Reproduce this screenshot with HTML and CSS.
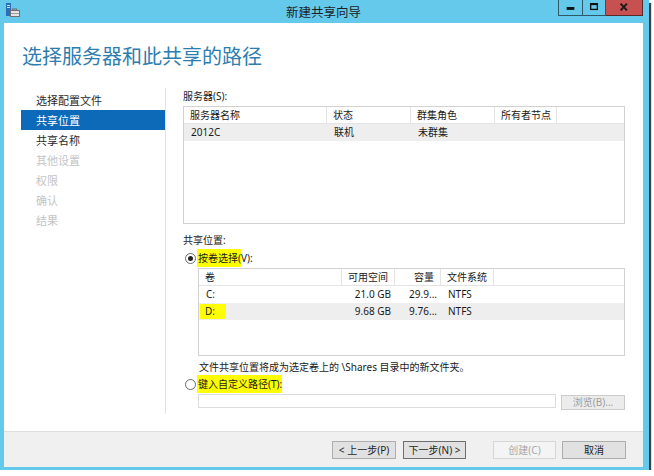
FILE: index.html
```html
<!DOCTYPE html>
<html lang="zh-CN">
<head>
<meta charset="utf-8">
<title>新建共享向导</title>
<link rel="stylesheet" href="styles.css">
</head>
<body>
<div class="window">
  <div class="titlebar">
    <div class="tb-left">
      <svg class="app-icon" width="14" height="14" viewBox="0 0 14 14">
        <rect x="0" y="0" width="5" height="13" fill="#2b6fb8"/>
        <rect x="1" y="2" width="3" height="1" fill="#bfe0ff"/>
        <rect x="1" y="4" width="3" height="1" fill="#bfe0ff"/>
        <rect x="6.5" y="6" width="4" height="2" fill="none" stroke="#6d6d6d" stroke-width="1"/>
        <rect x="4.5" y="7.5" width="9" height="6" fill="#e4e4e4" stroke="#707070" stroke-width="1"/>
        <rect x="5" y="10" width="8" height="1" fill="#9a9a9a"/>
      </svg>
    </div>
    <div class="tb-title">新建共享向导</div>
    <div class="tb-controls">
      <div class="ctl ctl-min"><svg width="24" height="15" viewBox="0 0 24 15"><rect x="8" y="7" width="8" height="3" fill="#111"/></svg></div>
      <div class="ctl ctl-max"><svg width="23" height="15" viewBox="0 0 23 15"><rect x="8" y="3.5" width="7" height="6" fill="none" stroke="#111" stroke-width="1.4"/><rect x="8" y="3" width="7.5" height="2" fill="#111"/></svg></div>
      <div class="ctl ctl-close"><svg width="37" height="15" viewBox="0 0 37 15"><path d="M15 3.5 L21.5 10.5 M21.5 3.5 L15 10.5" stroke="#1a1a1a" stroke-width="2"/></svg></div>
    </div>
  </div>
  <div class="client">
    <div class="header">
      <h1>选择服务器和此共享的路径</h1>
    </div>
    <div class="main">
      <ul class="nav">
        <li>选择配置文件</li>
        <li class="active">共享位置</li>
        <li>共享名称</li>
        <li class="disabled">其他设置</li>
        <li class="disabled">权限</li>
        <li class="disabled">确认</li>
        <li class="disabled">结果</li>
      </ul>
      <div class="content">
        <div class="label">服务器(S):</div>
        <div class="lv lv-servers">
          <div class="lv-head">
            <div class="cell">服务器名称</div>
            <div class="cell">状态</div>
            <div class="cell">群集角色</div>
            <div class="cell">所有者节点</div>
            <div class="cell"></div>
          </div>
          <div class="lv-row sel">
            <div class="cell">2012C</div>
            <div class="cell">联机</div>
            <div class="cell">未群集</div>
            <div class="cell"></div>
            <div class="cell"></div>
          </div>
        </div>

        <div class="label label-share">共享位置:</div>
        <div class="radio-row">
          <span class="radio checked"></span>
          <span class="radio-text"><span class="hl">按卷选择(</span>V):</span>
        </div>
        <div class="lv lv-volumes">
          <div class="lv-head">
            <div class="cell">卷</div>
            <div class="cell r">可用空间</div>
            <div class="cell r">容量</div>
            <div class="cell">文件系统</div>
            <div class="cell"></div>
          </div>
          <div class="lv-row">
            <div class="cell">C:</div>
            <div class="cell r">21.0 GB</div>
            <div class="cell r">29.9...</div>
            <div class="cell fs">NTFS</div>
            <div class="cell"></div>
          </div>
          <div class="lv-row sel">
            <div class="cell vol-d"><span class="hl hl-d">D:</span></div>
            <div class="cell r">9.68 GB</div>
            <div class="cell r">9.76...</div>
            <div class="cell fs">NTFS</div>
            <div class="cell"></div>
          </div>
        </div>
        <div class="note">文件共享位置将成为选定卷上的 \Shares 目录中的新文件夹。</div>
        <div class="radio-row radio-row-2">
          <span class="radio"></span>
          <span class="radio-text"><span class="hl">键入自定义路径(T):</span></span>
        </div>
        <div class="path-row">
          <div class="path-input"></div>
          <button class="browse" disabled>浏览(B)...</button>
        </div>
      </div>
    </div>
    <div class="footer">
      <button class="btn btn-prev">&lt; 上一步(P)</button>
      <button class="btn btn-next">下一步(N) &gt;</button>
      <button class="btn btn-create" disabled>创建(C)</button>
      <button class="btn btn-cancel">取消</button>
    </div>
  </div>
</div>
</body>
</html>
```

FILE: styles.css
```css
* { box-sizing: border-box; margin: 0; padding: 0; }
html, body { background: #fff; }
body {
  margin: 0;
  font-family: "Noto Sans", "Noto Sans CJK SC", sans-serif;
  color: #222;
}

.window {
  width: 649px;
  height: 470px;
  background: #64c9ea;
  display: flex;
  flex-direction: column;
  padding: 0 6px 3px 4px;
  box-shadow: 2px 3px 1px rgba(0, 0, 0, 0.75);
}

/* title bar */
.titlebar {
  height: 23px;
  display: grid;
  grid-template-columns: 1fr auto 1fr;
  align-items: start;
}
.tb-left { padding: 3px 0 0 2px; height: 23px; }
.app-icon { display: block; }
.tb-title {
  font-size: 12.5px;
  line-height: 23px;
  color: #1e1e1e;
  font-family: "Noto Sans CJK SC", sans-serif;
}
.tb-controls {
  justify-self: end;
  display: flex;
  height: 16px;
}
.ctl {
  height: 16px;
  border: 1px solid #2f5966;
  border-top: none;
  display: flex;
  align-items: center;
  justify-content: center;
}
.ctl svg { display: block; }
.ctl-min { width: 25px; }
.ctl-max { width: 23px; border-left: none; }
.ctl-close { width: 37px; background: #c75050; border-left: none; border-color: #5a2a2a; }

/* client area */
.client {
  flex: 1;
  background: #fff;
  display: flex;
  flex-direction: column;
}
.header {
  height: 62px;
  padding: 21px 0 0 18px;
}
.header h1 {
  font-family: "Noto Sans CJK SC", sans-serif;
  font-weight: 400;
  font-size: 20px;
  line-height: 24px;
  color: #2e7db0;
}

.main {
  flex: 1;
  display: flex;
  padding: 3px 18px 17px 17px;
}

.nav {
  width: 146px;
  list-style: none;
  padding-top: 2px;
  border-right: 1px solid #e2e2e2;
  font-size: 11px;
  font-family: "Noto Sans CJK SC", sans-serif;
}
.nav li {
  height: 20px;
  line-height: 20px;
  padding-left: 15px;
  color: #2a2a2a;
}
.nav li.active { background: #0c6ab9; color: #fff; }
.nav li.disabled { color: #c4c4c4; }

.content {
  flex: 1;
  padding-left: 17px;
  font-size: 10px;
  color: #1a1a1a;
}
.label {
  height: 16px;
  line-height: 16px;
  margin-bottom: 2px;
}
.label-share { margin-top: 8px; margin-bottom: 0; }

/* list views */
.lv {
  border: 1px solid #d2d2d2;
  background: #fff;
}
.lv-servers { height: 118px; }
.lv-volumes { height: 88px; margin: 2px 0 0 15px; }

.lv-head, .lv-row {
  display: grid;
}
.lv-servers .lv-head, .lv-servers .lv-row { grid-template-columns: 143px 84px 84px 62px 1fr; }
.lv-volumes .lv-head, .lv-volumes .lv-row { grid-template-columns: 143px 53px 46px 53px 1fr; }

.lv-head {
  height: 17px;
  border-bottom: 1px solid #e4e4e4;
}
.lv-head .cell {
  height: 16px;
  line-height: 16px;
  border-right: 1px solid #e4e4e4;
  padding: 0 6px;
  white-space: nowrap;
  overflow: hidden;
}
.lv-head .cell:last-child { border-right: none; }
.lv-row { height: 17px; }
.lv-row .cell {
  line-height: 17px;
  padding: 0 7px;
  white-space: nowrap;
}
.lv-row.sel { background: #eeeeee; }
.lv-head .cell.r { text-align: right; padding-right: 6px; }
.lv-row .cell.r { text-align: right; padding-right: 4px; }
.lv-row .cell.fs { padding-left: 7px; }
.lv-row .cell.vol-d { padding-left: 1px; }

.hl { background: #ffff00; }
.hl-d {
  display: inline-block;
  height: 15px;
  line-height: 15px;
  padding: 0 11px 0 5px;
}

/* radios */
.radio-row {
  display: flex;
  align-items: center;
  height: 16px;
  margin-top: 2px;
}
.radio {
  width: 11px;
  height: 11px;
  border-radius: 50%;
  border: 1px solid #6a6a6a;
  background: #fff;
  margin-left: 2px;
  margin-right: 1px;
  display: flex;
  align-items: center;
  justify-content: center;
}
.radio.checked::after {
  content: "";
  width: 5px;
  height: 5px;
  border-radius: 50%;
  background: #222;
}
.radio-text { line-height: 16px; }
.radio-text .hl { padding: 2px 0 2px 1px; }
.radio-row-2 { margin-top: 1px; }

.note {
  height: 16px;
  line-height: 16px;
  margin-top: 3px;
  padding-left: 16px;
}

.path-row {
  display: flex;
  align-items: flex-start;
  margin: 2px 0 0 15px;
  gap: 5px;
}
.path-input {
  width: 358px;
  height: 14px;
  border: 1px solid #dcdcdc;
  background: #fff;
}
.browse {
  width: 64px;
  height: 15px;
  margin-top: 1px;
  border: 1px solid #cccccc;
  background: #ececec;
  color: #9c9c9c;
  font-family: "Noto Sans", "Noto Sans CJK SC", sans-serif;
  font-size: 10px;
  line-height: 13px;
  text-align: center;
}

/* footer */
.footer {
  height: 36px;
  border-top: 1px solid #dfdfdf;
  background: #f0f0f0;
  display: flex;
  justify-content: flex-end;
  align-items: flex-start;
  padding: 9px 17px 0 0;
}
.btn {
  height: 18px;
  font-family: "Noto Sans", "Noto Sans CJK SC", sans-serif;
  font-size: 10px;
  line-height: 16px;
  color: #1e1e1e;
  text-align: center;
  border: 1px solid #adadad;
  background: #e1e1e1;
}
.btn-prev { width: 64px; }
.btn-next { width: 63px; margin-left: 7px; border-color: #6e6e6e; }
.btn-create { width: 63px; margin-left: 27px; background: #f4f4f4; border-color: #d6d6d6; color: #a8a8a8; }
.btn-cancel { width: 64px; margin-left: 6px; }
```
